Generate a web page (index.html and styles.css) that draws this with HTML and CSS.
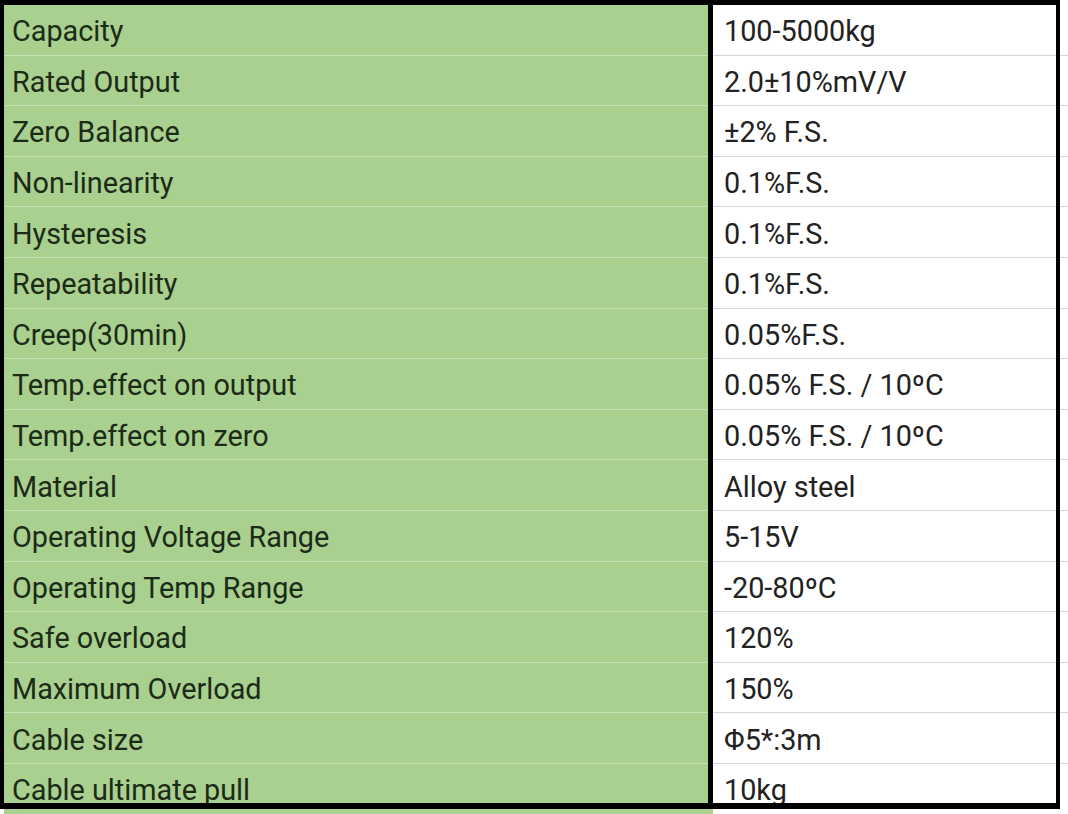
FILE: index.html
```html
<!DOCTYPE html>
<html>
<head>
<meta charset="utf-8">
<link rel="stylesheet" href="styles.css">
</head>
<body>
<div class="sheet">
  <div class="table">
    <div class="row"><div class="k">Capacity</div><div class="v">100-5000kg</div></div>
    <div class="row"><div class="k">Rated Output</div><div class="v">2.0±10%mV/V</div></div>
    <div class="row"><div class="k">Zero Balance</div><div class="v">±2% F.S.</div></div>
    <div class="row"><div class="k">Non-linearity</div><div class="v">0.1%F.S.</div></div>
    <div class="row"><div class="k">Hysteresis</div><div class="v">0.1%F.S.</div></div>
    <div class="row"><div class="k">Repeatability</div><div class="v">0.1%F.S.</div></div>
    <div class="row"><div class="k">Creep(30min)</div><div class="v">0.05%F.S.</div></div>
    <div class="row"><div class="k">Temp.effect on output</div><div class="v">0.05% F.S. / 10ºC</div></div>
    <div class="row"><div class="k">Temp.effect on zero</div><div class="v">0.05% F.S. / 10ºC</div></div>
    <div class="row"><div class="k">Material</div><div class="v">Alloy steel</div></div>
    <div class="row"><div class="k">Operating Voltage Range</div><div class="v">5-15V</div></div>
    <div class="row"><div class="k">Operating Temp Range</div><div class="v">-20-80ºC</div></div>
    <div class="row"><div class="k">Safe overload</div><div class="v">120%</div></div>
    <div class="row"><div class="k">Maximum Overload</div><div class="v">150%</div></div>
    <div class="row"><div class="k">Cable size</div><div class="v">Φ5*:3m</div></div>
    <div class="row"><div class="k">Cable ultimate pull</div><div class="v">10kg</div></div>
  </div>
  <div class="frame"></div>
  <div class="divider"></div>
</div>
</body>
</html>
```
FILE: styles.css
```css
html, body {
  margin: 0;
  padding: 0;
  background: #ffffff;
  overflow: hidden;
}
.sheet {
  position: relative;
  width: 1068px;
  height: 814px;
  overflow: hidden;
  font-family: Roboto, "Liberation Sans", sans-serif;
  font-size: 28.8px;
}
.table {
  display: flex;
  flex-direction: column;
  padding-top: 5px;
  padding-left: 4px;
}
.row {
  display: grid;
  grid-template-columns: 709px 1fr;
  height: 50.6px;
  box-sizing: border-box;
}
.k, .v {
  display: flex;
  align-items: center;
  box-sizing: border-box;
  padding-top: 3px;
  white-space: nowrap;
}
.k {
  background: #a9d08e;
  color: #1c2a18;
  padding-left: 8px;
  border-bottom: 1px solid #c9e2b8;
}
.v {
  background: #ffffff;
  color: #222222;
  padding-left: 11px;
  border-bottom: 1px solid #d4d4d4;
}
.frame {
  position: absolute;
  left: 0;
  top: 0;
  width: 1060px;
  height: 809px;
  box-sizing: border-box;
  border: 5px solid #000;
  border-left-width: 4px;
  border-bottom-width: 6px;
  border-right-width: 4px;
}
.divider {
  position: absolute;
  left: 708px;
  top: 0;
  width: 5px;
  height: 809px;
  background: #000;
}
```
